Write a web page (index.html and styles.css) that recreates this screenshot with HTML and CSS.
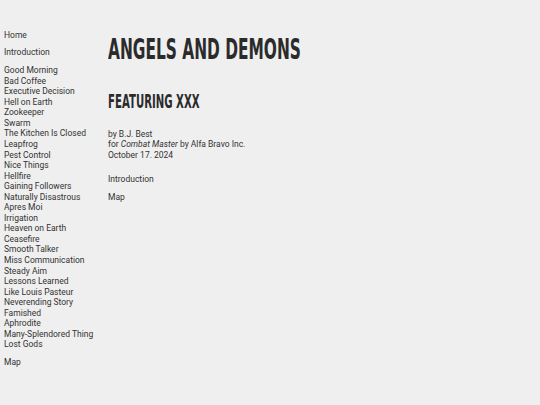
FILE: index.html
```html
<!DOCTYPE html>
<html>
<head>
<meta charset="utf-8">
<link rel="stylesheet" href="styles.css">
</head>
<body>
<div class="page">
  <nav class="sidebar">
    <ul class="group"><li>Home</li></ul>
    <ul class="group"><li>Introduction</li></ul>
    <ul class="group">
      <li>Good Morning</li>
      <li>Bad Coffee</li>
      <li>Executive Decision</li>
      <li>Hell on Earth</li>
      <li>Zookeeper</li>
      <li>Swarm</li>
      <li>The Kitchen Is Closed</li>
      <li>Leapfrog</li>
      <li>Pest Control</li>
      <li>Nice Things</li>
      <li>Hellfire</li>
      <li>Gaining Followers</li>
      <li>Naturally Disastrous</li>
      <li>Apres Moi</li>
      <li>Irrigation</li>
      <li>Heaven on Earth</li>
      <li>Ceasefire</li>
      <li>Smooth Talker</li>
      <li>Miss Communication</li>
      <li>Steady Aim</li>
      <li>Lessons Learned</li>
      <li>Like Louis Pasteur</li>
      <li>Neverending Story</li>
      <li>Famished</li>
      <li>Aphrodite</li>
      <li>Many-Splendored Thing</li>
      <li>Lost Gods</li>
    </ul>
    <ul class="group"><li>Map</li></ul>
  </nav>
  <main class="main">
    <h1 class="title">ANGELS AND DEMONS</h1>
    <h2 class="subtitle">FEATURING XXX</h2>
    <div class="meta">
      <div>by B.J. Best</div>
      <div>for <em>Combat Master</em> by Alfa Bravo Inc.</div>
      <div>October 17. 2024</div>
    </div>
    <ul class="links">
      <li>Introduction</li>
      <li>Map</li>
    </ul>
  </main>
</div>
</body>
</html>
```
FILE: styles.css
```css
html, body {
  margin: 0;
  padding: 0;
  background: #efefef;
}
body {
  font-family: Roboto, "Liberation Sans", sans-serif;
  font-size: 8.5px;
  line-height: 10.55px;
  color: #333;
}
ul {
  list-style: none;
  margin: 0;
  padding: 0;
}
.page {
  display: flex;
  padding-top: 29.5px;
}
.sidebar {
  width: 104px;
  padding-left: 4px;
  flex-shrink: 0;
}
.group {
  margin-bottom: 7.3px;
}
.main {
  flex: 1;
}
.title,
.subtitle {
  margin: 0;
  font-family: "DejaVu Sans", sans-serif;
  font-weight: bold;
  color: #2b2b2b;
  transform-origin: left center;
  white-space: nowrap;
}
.title {
  font-size: 29px;
  line-height: 38px;
  transform: scaleX(0.531);
}
.subtitle {
  margin-top: 21px;
  font-size: 20px;
  line-height: 24px;
  transform: scaleX(0.508);
}
.meta {
  margin-top: 16px;
}
.links {
  margin-top: 14px;
}
.links li {
  margin-bottom: 7.3px;
}
```
